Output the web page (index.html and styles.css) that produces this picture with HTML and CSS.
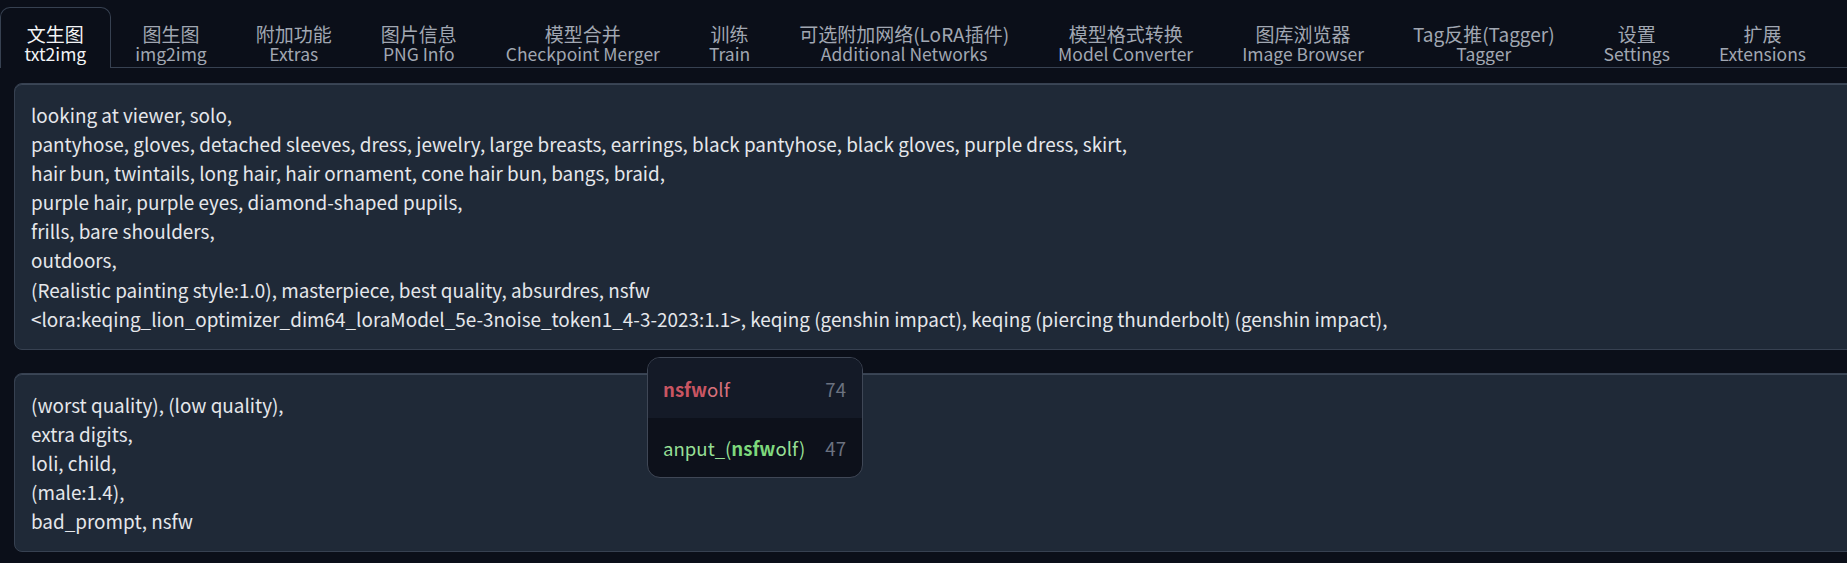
FILE: index.html
```html
<!DOCTYPE html>
<html lang="zh">
<head>
<meta charset="utf-8">
<title>txt2img</title>
<link rel="stylesheet" href="styles.css">
</head>
<body>
<div class="app">
  <nav class="tabs">
    <button class="tab selected"><span class="zh">文生图</span><span class="en">txt2img</span></button>
    <button class="tab"><span class="zh">图生图</span><span class="en">img2img</span></button>
    <button class="tab"><span class="zh">附加功能</span><span class="en">Extras</span></button>
    <button class="tab"><span class="zh">图片信息</span><span class="en">PNG Info</span></button>
    <button class="tab"><span class="zh">模型合并</span><span class="en">Checkpoint Merger</span></button>
    <button class="tab"><span class="zh">训练</span><span class="en">Train</span></button>
    <button class="tab"><span class="zh">可选附加网络(LoRA插件)</span><span class="en">Additional Networks</span></button>
    <button class="tab"><span class="zh">模型格式转换</span><span class="en">Model Converter</span></button>
    <button class="tab"><span class="zh">图库浏览器</span><span class="en">Image Browser</span></button>
    <button class="tab"><span class="zh">Tag反推(Tagger)</span><span class="en">Tagger</span></button>
    <button class="tab"><span class="zh">设置</span><span class="en">Settings</span></button>
    <button class="tab"><span class="zh">扩展</span><span class="en">Extensions</span></button>
  </nav>
  <div class="prompts">
    <div class="prompt">looking at viewer, solo,
pantyhose, gloves, detached sleeves, dress, jewelry, large breasts, earrings, black pantyhose, black gloves, purple dress, skirt,
hair bun, twintails, long hair, hair ornament, cone hair bun, bangs, braid,
purple hair, purple eyes, diamond-shaped pupils,
frills, bare shoulders,
outdoors,
(Realistic painting style:1.0), masterpiece, best quality, absurdres, nsfw
&lt;lora:keqing_lion_optimizer_dim64_loraModel_5e-3noise_token1_4-3-2023:1.1&gt;, keqing (genshin impact), keqing (piercing thunderbolt) (genshin impact),</div>
    <div class="prompt">(worst quality), (low quality),
extra digits,
loli, child,
(male:1.4),
bad_prompt, nsfw</div>
    <ul class="autocomplete">
      <li class="ac-row ac-first"><span class="ac-name neg"><b>nsfw</b>olf</span><span class="ac-count">74</span></li>
      <li class="ac-row"><span class="ac-name pos">anput_(<b>nsfw</b>olf)</span><span class="ac-count">47</span></li>
    </ul>
  </div>
</div>
</body>
</html>
```

FILE: styles.css
```css
html, body {
  margin: 0;
  padding: 0;
  background: #0b0f19;
  overflow: hidden;
}
body {
  font-family: "Noto Sans CJK SC", "Noto Sans", sans-serif;
  font-size: 18.9px;
  color: #e5e7eb;
}
.app {
  width: 1900px;
  padding-top: 7px;
}
.tabs {
  display: flex;
  border-bottom: 1px solid #374151;
}
.tab {
  display: flex;
  flex-direction: column;
  align-items: center;
  background: transparent;
  border: 1px solid transparent;
  border-bottom: none;
  border-radius: 10px 10px 0 0;
  padding: 16px 23.5px 5px;
  margin-bottom: -1px;
  font-family: inherit;
  color: #a1a7b2;
  cursor: pointer;
}
.tab.selected {
  border-color: #374151;
  background: #0b0f19;
  color: #f3f4f6;
}
.tab .zh {
  display: block;
  white-space: nowrap;
  font-size: 19px;
  line-height: 20px;
}
.tab .en {
  display: block;
  white-space: nowrap;
  font-size: 17.5px;
  line-height: 19px;
}
.prompts {
  position: relative;
  display: flex;
  flex-direction: column;
  gap: 23px;
  padding: 15px 0 0 14px;
}
.prompt {
  background: #1f2937;
  border: 1px solid #374151;
  box-shadow: inset 0 1px 0 #3b4656;
  border-radius: 8px;
  padding: 16px 16px;
  line-height: 29.1px;
  white-space: pre;
  color: #e5e7eb;
}
.autocomplete {
  position: absolute;
  left: 647px;
  top: 289px;
  width: 214px;
  margin: 0;
  padding: 0;
  list-style: none;
  border: 1px solid #3f4756;
  border-radius: 13px;
  overflow: hidden;
  background: #0d111b;
  font-size: 18.6px;
}
.ac-row {
  display: flex;
  justify-content: space-between;
  align-items: center;
  height: 59px;
  padding: 0 16px 0 15px;
}
.ac-first {
  background: #141a27;
  height: 60px;
}
.ac-name b { font-weight: 600; }
.ac-name.neg { color: #d7717b; }
.ac-name.neg b { color: #c95562; }
.ac-name.pos { color: #96df95; }
.ac-name.pos b { color: #7dd87c; }
.ac-count { color: #6b7280; }
```
